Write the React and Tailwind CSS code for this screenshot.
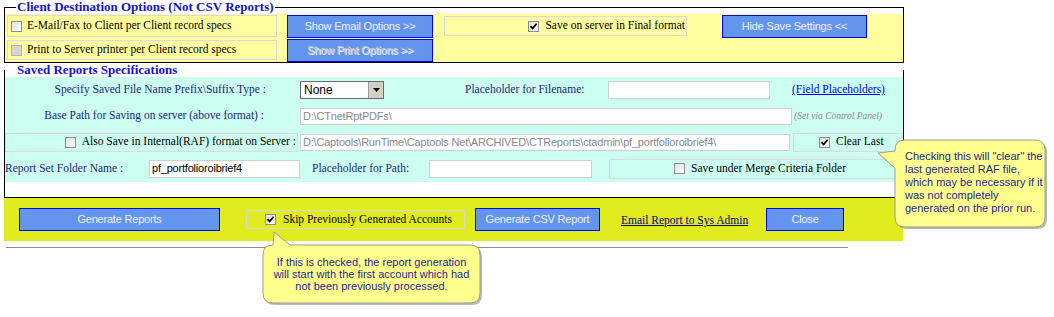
import React from "react";

function Check({ on, off }) {
  return (
    <span
      className={
        "relative inline-block shrink-0 w-[11px] h-[11px] border " +
        (off
          ? "border-[#b4b4b4] bg-[#d6d6d6]"
          : "border-[#8e8e8e] bg-[linear-gradient(135deg,#dedede,#ffffff)]")
      }
    >
      {on && (
        <svg className="absolute inset-0" width="9" height="9" viewBox="0 0 9 9">
          <path d="M1.5 4.2 L3.6 6.4 L7.6 1.8" stroke="#000" strokeWidth="1.7" fill="none" />
        </svg>
      )}
    </span>
  );
}

function Btn({ className, children, disabled }) {
  return (
    <button
      className={
        "shrink-0 h-[23px] bg-[#6495ed] border border-[#0000ff] text-[11px] tracking-[-0.2px] [font-family:'Liberation_Sans',Arial,sans-serif] " +
        (disabled
          ? "text-[#c6ccd8] [text-shadow:1px_1px_0_#eef0f4]"
          : "text-[#eef0ff]") +
        " " +
        className
      }
    >
      {children}
    </button>
  );
}

function Field({ className, value, muted }) {
  return (
    <div
      className={
        "shrink-0 bg-white border border-[#cfcfcf] flex items-center pl-[2px] overflow-hidden whitespace-nowrap text-[11px] tracking-[-0.2px] [font-family:'Liberation_Sans',Arial,sans-serif] " +
        (muted ? "text-[#8a8a8a]" : "text-black") +
        " " +
        className
      }
    >
      {value}
    </div>
  );
}

export default function App() {
  return (
    <div className="relative w-[1054px] h-[317px] bg-white overflow-hidden text-[11.5px] [font-family:'Liberation_Serif',serif]">
      {/* client destination options */}
      <fieldset className="ml-[4px] w-[900px] border border-black">
        <legend className="ml-[11px] px-[1px] text-[13px] leading-[14px] font-bold text-[#1414c8]">
          Client Destination Options (Not CSV Reports)
        </legend>
        <div className="bg-[#ffffa0] h-[48px] pl-[2px] flex flex-col">
          <div className="flex items-center h-[24px]">
            <div className="w-[270px] h-[22px] border border-[#dadada] flex items-center pl-[3px]">
              <Check />
              <span className="ml-[5px]">E-Mail/Fax to Client per Client record specs</span>
            </div>
            <Btn className="ml-[10px] w-[146px]">Show Email Options &gt;&gt;</Btn>
            <div className="ml-[11px] w-[243px] h-[20px] border border-[#dadada] flex items-center justify-end pr-[1px]">
              <Check on />
              <span className="ml-[6px]">Save on server in Final format</span>
            </div>
            <Btn className="ml-[35px] w-[145px]">Hide Save Settings &lt;&lt;</Btn>
          </div>
          <div className="flex items-center h-[24px]">
            <div className="w-[270px] h-[20px] border border-[#dadada] flex items-center pl-[3px]">
              <Check off />
              <span className="ml-[5px]">Print to Server printer per Client record specs</span>
            </div>
            <Btn disabled className="ml-[10px] w-[146px]">Show Print Options &gt;&gt;</Btn>
          </div>
        </div>
      </fieldset>

      {/* saved reports */}
      <fieldset className="ml-[4px] w-[900px] border-x border-b border-t-0 border-black pb-[15px]">
        <legend className="ml-[12px] text-[13px] leading-[14px] font-bold text-[#1414c8]">
          Saved Reports Specifications
        </legend>
        <div className="bg-[#ccfff0] text-[#1e1e78]">
          <div className="flex items-center h-[26px]">
            <div className="w-[261px] text-right">Specify Saved File Name Prefix\Suffix Type :</div>
            <div className="ml-[34px] w-[84px] h-[18px] bg-white border border-[#6b6b6b] flex items-center justify-between [font-family:'Liberation_Sans',Arial,sans-serif] text-[12px] text-black">
              <span className="pl-[3px]">None</span>
              <span className="w-[15px] h-full bg-[#d4d0c8] border-l border-[#9a9a9a] flex items-center justify-center">
                <svg width="7" height="4" viewBox="0 0 7 4">
                  <path d="M0 0 H7 L3.5 4 Z" fill="#000" />
                </svg>
              </span>
            </div>
            <div className="ml-[81px] w-[143px]">Placeholder for Filename:</div>
            <Field className="w-[162px] h-[18px]" value="" />
            <a href="#" className="ml-[22px] text-[#0000ee] underline">(Field Placeholders)</a>
          </div>
          <div className="flex items-center h-[26px]">
            <div className="w-[259px] text-right">Base Path for Saving on server (above format) :</div>
            <Field className="ml-[36px] w-[492px] h-[17px]" muted value="D:\CTnetRptPDFs\" />
            <span className="ml-[2px] text-[9.5px] italic text-[#8c8c8c]">(Set via Control Panel)</span>
          </div>
          <div className="flex items-center h-[26px] text-black">
            <div className="w-[293px] h-[19px] border border-[#dadada] flex items-center justify-end pr-[1px]">
              <Check />
              <span className="ml-[6px]">Also Save in Internal(RAF) format on Server :</span>
            </div>
            <Field className="ml-[2px] w-[490px] h-[17px]" muted value="D:\Captools\RunTime\Captools Net\ARCHIVED\CTReports\ctadmin\pf_portfolioroibrief4\" />
            <div className="ml-[3px] w-[109px] h-[19px] border border-[#dadada] flex items-center pl-[25px]">
              <Check on />
              <span className="ml-[6px]">Clear Last</span>
            </div>
          </div>
          <div className="flex items-center h-[27px]">
            <div className="w-[144px]">Report Set Folder Name :</div>
            <Field className="w-[151px] h-[18px]" value="pf_portfolioroibrief4" />
            <div className="ml-[12px] w-[117px]">Placeholder for Path:</div>
            <Field className="w-[163px] h-[18px]" value="" />
            <div className="ml-[17px] w-[293px] h-[20px] border border-[#dadada] flex items-center pl-[64px] text-black">
              <Check />
              <span className="ml-[6px]">Save under Merge Criteria Folder</span>
            </div>
          </div>
        </div>
      </fieldset>

      {/* actions */}
      <div className="ml-[4px] w-[899px] h-[43px] bg-[#e1ec1e] flex items-start pt-[10px]">
        <Btn className="ml-[15px] w-[201px]">Generate Reports</Btn>
        <div className="ml-[26px] mt-[2px] w-[219px] h-[19px] border border-[#d8d8d8] flex items-center pl-[18px] text-black">
          <Check on />
          <span className="ml-[7px]">Skip Previously Generated Accounts</span>
        </div>
        <Btn className="ml-[10px] w-[125px]">Generate CSV Report</Btn>
        <a href="#" className="ml-[21px] mt-[4px] text-[#000080] underline">Email Report to Sys Admin</a>
        <Btn className="ml-auto mr-[59px] w-[78px]">Close</Btn>
      </div>
      <div className="mt-[6px] ml-[6px] w-[842px] h-[1px] bg-[#8c8c8c]" />

      {/* tooltip: clear last */}
      <div className="absolute left-[870px] top-[138px] w-[182px] h-[95px]">
        <svg className="absolute inset-0" width="182" height="95" viewBox="0 0 182 95">
          <path
            d="M35 2 H165 Q175 2 175 12 V79 Q175 89 165 89 H35 Q25 89 25 79 V30 L8 15 L25 13 V12 Q25 2 35 2 Z"
            fill="#8a8a8a"
            transform="translate(2 2)"
            opacity="0.6"
          />
          <path
            d="M35 2 H165 Q175 2 175 12 V79 Q175 89 165 89 H35 Q25 89 25 79 V30 L8 15 L25 13 V12 Q25 2 35 2 Z"
            fill="#ffff8e"
            stroke="#9c9c9c"
          />
        </svg>
        <div className="absolute left-[35px] top-[12px] w-[140px] text-[11px] leading-[13px] text-[#1f1f8f] [font-family:'Liberation_Sans',Arial,sans-serif] whitespace-nowrap">
          Checking this will "clear" the
          <br />
          last generated RAF file,
          <br />
          which may be necessary if it
          <br />
          was not completely
          <br />
          generated on the prior run.
        </div>
      </div>

      {/* tooltip: skip accounts */}
      <div className="absolute left-[258px] top-[228px] w-[230px] h-[82px]">
        <svg className="absolute inset-0" width="230" height="82" viewBox="0 0 230 82">
          <path
            d="M5 27 Q5 17 15 17 L16 4 L32 17 H212 Q222 17 222 27 V65 Q222 75 212 75 H15 Q5 75 5 65 Z"
            fill="#8a8a8a"
            transform="translate(2 2)"
            opacity="0.6"
          />
          <path
            d="M5 27 Q5 17 15 17 L16 4 L32 17 H212 Q222 17 222 27 V65 Q222 75 212 75 H15 Q5 75 5 65 Z"
            fill="#ffff8e"
            stroke="#9c9c9c"
          />
        </svg>
        <div className="absolute left-[5px] top-[28px] w-[217px] text-center text-[11px] leading-[12px] text-[#1f1f8f] [font-family:'Liberation_Sans',Arial,sans-serif]">
          If this is checked, the report generation
          <br />
          will start with the first account which had
          <br />
          not been previously processed.
        </div>
      </div>
    </div>
  );
}
